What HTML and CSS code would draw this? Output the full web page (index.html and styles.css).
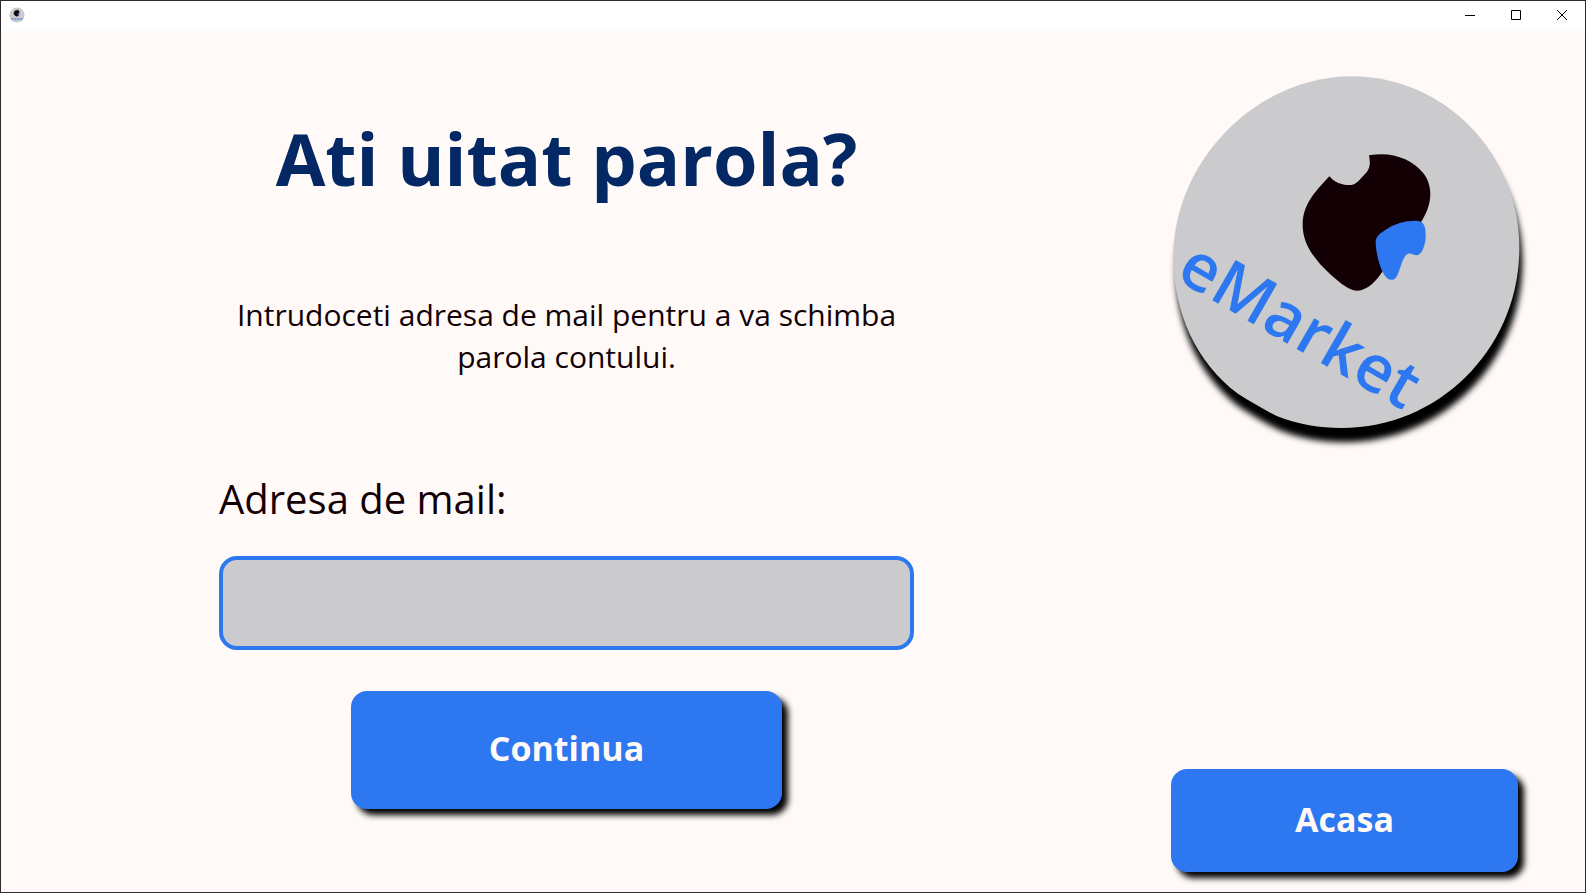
FILE: index.html
```html
<!DOCTYPE html>
<html lang="ro">
<head>
<meta charset="utf-8">
<meta name="viewport" content="width=device-width, initial-scale=1">
<title>eMarket</title>
<link rel="stylesheet" href="styles.css">
</head>
<body>
<div class="window">
  <header class="titlebar">
    <svg class="app-icon" viewBox="0 0 16 16" aria-hidden="true">
      <circle cx="8" cy="8" r="7.600" fill="#cbcbcd"/>
      <path d="M6.600 3.600 Q7.500 4.600 8 3 Q10.400 3.200 10 6 Q9.800 9.200 8 9.300 Q5 8.600 5 6.300 Q5.200 4.500 6.600 3.600Z" fill="#120005" stroke="#120005" stroke-width=".6"/>
      <path d="M8.200 6.500 L9.900 6 Q10.200 7.600 9 8.800Z" fill="#2d77f1"/>
      <path d="M2 12 H14" stroke="#2d77f1" stroke-width="1.600" stroke-dasharray="1.500 .4" opacity=".65"/>
    </svg>
    <div class="window-controls">
      <button class="window-button" type="button" aria-label="Minimizare"><svg viewBox="0 0 12 12"><path d="M1 6.500H11"/></svg></button>
      <button class="window-button" type="button" aria-label="Maximizare"><svg viewBox="0 0 12 12"><path d="M1.500 1.500H10.500V10.500H1.500Z"/></svg></button>
      <button class="window-button" type="button" aria-label="Inchidere"><svg viewBox="0 0 12 12"><path d="M1 1L11 11M11 1L1 11"/></svg></button>
    </div>
  </header>
  <main class="page">
    <form class="reset-form">
      <h1 class="title">Ati uitat parola?</h1>
      <p class="intro">Intrudoceti adresa de mail pentru a va schimba parola contului.</p>
      <label class="field-label" for="email">Adresa de mail:</label>
      <input class="field" id="email" name="email" type="email">
      <button class="button button-submit" type="submit">Continua</button>
    </form>
    <aside class="side">
      <svg class="logo" viewBox="33 40 1041 1062" role="img" aria-label="eMarket">
        <defs>
          <filter id="soft" x="-10%" y="-10%" width="120%" height="120%"><feGaussianBlur stdDeviation="9"/></filter>
          <path id="disc" d="M575 47 C853 47 1078 278 1078 562 C1078 860 840 1102 545 1102 C480 1102 415 1092 350 1066 C310 1046 270 1023 232 998 C110 908 40 755 40 590 C40 300 290 47 575 47Z"/>
        </defs>
        <use href="#disc" x="9" y="43" fill="#000" filter="url(#soft)"/>
        <use href="#disc" fill="#cbcbcd"/>
        <path fill="#120005" d="M627 284 C695 272 755 294 790 338 C820 376 818 432 782 486 L668 632 C650 660 622 690 592 690 C570 690 545 672 510 640 C462 595 428 550 428 492 C428 435 460 398 508 347 C525 367 550 375 574 373 C590 370 600 355 613 342 C630 325 632 312 627 284Z"/>
        <path fill="#2d77f1" d="M647 545 C646 525 665 515 682 504 C710 487 745 478 775 481 C792 483 798 500 797 528 C796 555 785 584 769 584 C760 583 755 577 744 579 C725 588 721 635 707 652 C700 660 685 660 676 647 C660 625 648 580 647 545Z"/>
        <text class="logo-text" transform="translate(43 653) rotate(30)">eMarket</text>
      </svg>
      <button class="button button-home" type="button">Acasa</button>
    </aside>
  </main>
</div>
</body>
</html>
```
FILE: styles.css
```css
* {
  box-sizing: border-box;
}

body {
  margin: 0;
  font-family: "Open Sans", "Noto Sans", sans-serif;
  color: #120005;
}

.window {
  display: flex;
  flex-direction: column;
  min-height: 100vh;
  border: 1px solid #2b2b2f;
  background: #fffaf8;
}

.titlebar {
  display: flex;
  align-items: flex-start;
  justify-content: space-between;
  height: 30px;
  padding-left: 8px;
  background: #fff;
}

.app-icon {
  width: 16px;
  height: 16px;
  margin-top: 6px;
}

.window-controls {
  display: flex;
}

.window-button {
  display: grid;
  place-items: center;
  width: 46px;
  height: 28px;
  padding: 0;
  border: 0;
  background: transparent;
}

.window-button svg {
  width: 12px;
  height: 12px;
  fill: none;
  stroke: #000;
}

.page {
  flex: 1;
  display: grid;
  grid-template-columns: 218fr 695fr 257fr 347fr 67fr;
}

.reset-form {
  grid-column: 2;
  display: flex;
  flex-direction: column;
}

.title {
  margin: 75px 0 0;
  font-size: 72px;
  line-height: 104px;
  font-weight: 700;
  text-align: center;
  color: #032863;
}

.intro {
  margin: 84px 0 0;
  padding: 0 8px;
  font-size: 30px;
  line-height: 42px;
  text-align: center;
}

.field-label {
  margin-top: 91px;
  font-size: 40px;
  line-height: 60px;
}

.field {
  width: 100%;
  height: 94px;
  margin-top: 27px;
  padding: 0 20px;
  border: 4px solid #2d77f1;
  border-radius: 18px;
  background: #cbcbcd;
  font: inherit;
  font-size: 32px;
  outline: 0;
}

.button {
  padding: 0 0 4px;
  border: 0;
  border-radius: 16px;
  background: #2d77f1;
  color: #fffaf8;
  font: inherit;
  font-size: 34px;
  font-weight: 700;
  box-shadow: 6px 6px 6px #000;
}

.button-submit {
  align-self: center;
  width: 62%;
  height: 118px;
  margin-top: 41px;
}

.side {
  grid-column: 4;
  display: flex;
  flex-direction: column;
  justify-content: space-between;
  padding: 43px 0 20px;
}

.logo {
  width: 100%;
  overflow: visible;
}

.logo-text {
  font-family: "Open Sans", sans-serif;
  font-size: 196px;
  font-weight: 600;
  fill: #2d77f1;
}

.button-home {
  width: 100%;
  height: 103px;
}
```
